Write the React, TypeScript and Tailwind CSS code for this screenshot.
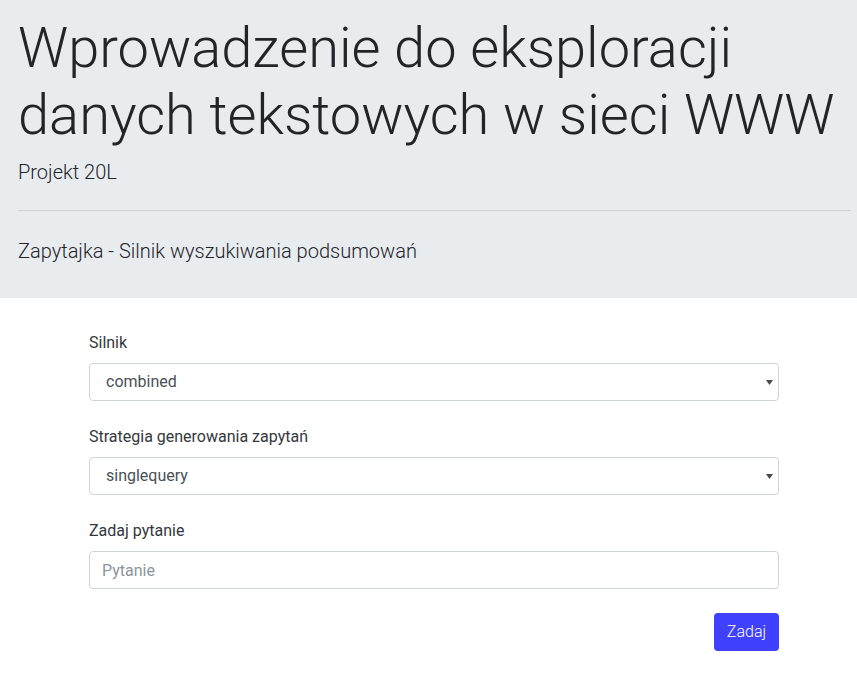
function Select({ value }: { value: string }) {
  return (
    <div className="relative">
      <select
        defaultValue={value}
        className="w-full h-[38px] pl-4 pr-8 border border-[#ced4da] rounded bg-white text-[#495057] appearance-none outline-none"
      >
        <option value={value}>{value}</option>
      </select>
      <svg
        className="absolute right-[6px] top-[17px] pointer-events-none"
        width="7"
        height="5"
        viewBox="0 0 7 5"
      >
        <path d="M0 0H7L3.5 5Z" fill="#4a4a4a" />
      </svg>
    </div>
  );
}

export default function App() {
  return (
    <div className="min-h-screen bg-white text-[#212529] font-['Roboto',sans-serif]">
      <div className="bg-[#e9ecef] pl-[18px] pr-[6px] pt-[15px] pb-4">
        <h1 className="text-[56px] font-light leading-[1.2] mb-2">
          Wprowadzenie do eksploracji danych tekstowych w sieci WWW
        </h1>
        <p className="text-[20px] font-light leading-normal">Projekt 20L</p>
        <hr className="mt-[23px] mb-[25px] border-0 border-t border-black/10" />
        <p className="text-[20px] font-light leading-normal mb-4">
          Zapytajka - Silnik wyszukiwania podsumowań
        </p>
      </div>

      <form className="ml-[89px] w-[690px] pt-[33px] flex flex-col gap-6 text-base leading-normal">
        <div>
          <label className="block mb-2 text-[#34383c]">Silnik</label>
          <Select value="combined" />
        </div>
        <div>
          <label className="block mb-2 text-[#34383c]">Strategia generowania zapytań</label>
          <Select value="singlequery" />
        </div>
        <div>
          <label className="block mb-2 text-[#34383c]">Zadaj pytanie</label>
          <input
            type="text"
            placeholder="Pytanie"
            className="w-full h-[38px] px-3 border border-[#ced4da] rounded bg-white text-[#495057] placeholder:text-[#8c959d] outline-none"
          />
        </div>
        <div className="flex justify-end">
          <button
            type="button"
            className="h-[38px] w-[65px] rounded bg-[#4040ff] text-white font-light"
          >
            Zadaj
          </button>
        </div>
      </form>
    </div>
  );
}
